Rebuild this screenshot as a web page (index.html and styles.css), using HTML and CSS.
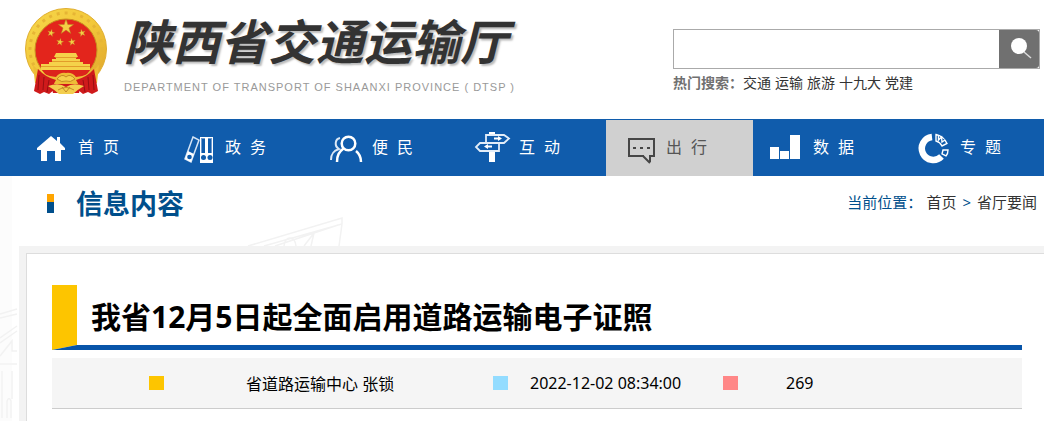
FILE: index.html
```html
<!DOCTYPE html>
<html lang="zh-CN">
<head>
<meta charset="utf-8">
<title>陕西省交通运输厅</title>
<link rel="stylesheet" href="styles.css">
</head>
<body>
<header class="header">
  <a class="brand" href="#">
    <svg class="emblem" viewBox="0 0 84 90" aria-hidden="true">
      <defs>
        <linearGradient id="gold" x1="0" y1="0" x2="1" y2="1">
          <stop offset="0" stop-color="#f6d64a"/><stop offset=".5" stop-color="#f3c83a"/><stop offset="1" stop-color="#dda22a"/>
        </linearGradient>
        <path id="star" d="M0-10 2.3-3.1 9.5-3.1 3.7 1.2 5.9 8.1 0 3.9-5.9 8.1-3.7 1.2-9.5-3.1-2.3-3.1z"/>
      </defs>
      <circle cx="42" cy="42" r="40.5" fill="url(#gold)" stroke="#e0ae30" stroke-width="1"/>
      <circle cx="42" cy="42" r="36" fill="none" stroke="#e6b535" stroke-width="3" stroke-dasharray="3 5"/>
      <circle cx="42" cy="43" r="31" fill="#e3251c" stroke="#c88f20" stroke-width="1"/>
      <g fill="#f4cf45" stroke="#b98022" stroke-width=".7">
        <use href="#star" transform="translate(42 20) scale(.8)"/>
        <use href="#star" transform="translate(27 26) rotate(15) scale(.38)"/>
        <use href="#star" transform="translate(58 26) rotate(-15) scale(.38)"/>
        <use href="#star" transform="translate(36 35) rotate(10) scale(.38)"/>
        <use href="#star" transform="translate(48 35) rotate(-10) scale(.38)"/>
      </g>
      <path d="M32 46H52L54 50H52V52H56V55H59V57H66V63H17V57H25V55H28V52H32V50H30z" fill="#f5d24a"/>
      <path d="M31 50.500H53M28 54.500H56M17 59.500H66" stroke="#dd8f22" stroke-width=".8"/>
      <path d="M18 63H66Q63 68 59 70L42 76 25 70Q21 68 18 63z" fill="#dc241c"/>
      <path d="M9 58Q18 69 32 70Q36 65 42 66Q48 65 52 70Q66 69 75 58L73 76Q60 81 42 79Q24 81 11 76z" fill="#eebd36"/>
      <path d="M14 62Q21 70 32 73Q28 79 30 83L25 87 20 85 16 87 10 84z" fill="#cf1a1b"/>
      <path d="M70 62Q63 70 52 73Q56 79 54 83L59 87 64 85 68 87 74 84z" fill="#cf1a1b"/>
      <path d="M15 68l-1 15M20 70l-1 13M25 73l-2 12M69 68l1 15M64 70l1 13M59 73l2 12" stroke="#970f12" stroke-width="1"/>
      <path d="M27 77H57L55 86H29z" fill="#cf1a1b"/>
      <path d="M24 79Q35 75 42 80Q49 75 60 79Q53 83 49 87H35Q31 83 24 79z" fill="#f3ce4e"/>
      <path d="M33 72Q38 66 42 70Q46 66 51 72Q46 76 42 74Q38 76 33 72z" fill="#f5d04b" stroke="#b87b1c" stroke-width=".8"/>
      <path d="M34 83q8-5 16 0M38 80l4 5 4-5" fill="none" stroke="#b87b1c" stroke-width=".8"/>
    </svg>
    <span class="brand-text">
      <span class="wordmark">陕西省交通运输厅</span>
      <span class="brand-en">DEPARTMENT OF TRANSPORT OF SHAANXI PROVINCE ( DTSP )</span>
    </span>
  </a>
  <div class="search">
    <form class="search-form">
      <input class="search-input" type="text" aria-label="搜索">
      <button class="search-button" type="button" aria-label="搜索">
        <svg viewBox="0 0 40 38" aria-hidden="true"><circle cx="20" cy="16" r="8" fill="#fff"/><path d="m25 22 7 6" stroke="#ddd" stroke-width="1.500"/></svg>
      </button>
    </form>
    <p class="hot"><b>热门搜索：</b><a href="#">交通</a><a href="#">运输</a><a href="#">旅游</a><a href="#">十九大</a><a href="#">党建</a></p>
  </div>
</header>

<nav class="nav">
  <a class="nav-item" href="#">
    <svg class="nav-icon" viewBox="0 0 60 57" aria-hidden="true"><path d="m33 17 6 5v-4h3v6l5 5v2h-4v11h-6V32h-8v10h-6V31h-4v-2z" fill="#fff"/></svg>
    <span class="nav-label"><span>首</span><span>页</span></span></a>
  <a class="nav-item" href="#">
    <svg class="nav-icon" viewBox="0 0 60 57" aria-hidden="true"><path d="M35 18h13v26H35z" fill="#fff"/><path d="M36 19h4v15h-4zM43 19h4v15h-4z" fill="#6f9bd0"/><path d="M37 20h3v14h-3zM43 20h3v14h-3z" fill="#105cac"/><circle cx="38.500" cy="38.500" r="2.500" fill="#105cac"/><circle cx="45" cy="38.500" r="2.500" fill="#105cac"/><path d="m28 18 6 3-8 22-6-3z" fill="none" stroke="#d5e4f5" stroke-width="1.500"/><path d="m23 32 6 3-3 8-6-3z" fill="#fff"/><circle cx="24.500" cy="38" r="2.300" fill="#105cac"/></svg>
    <span class="nav-label"><span>政</span><span>务</span></span></a>
  <a class="nav-item" href="#">
    <svg class="nav-icon" viewBox="0 0 60 57" aria-hidden="true"><g fill="none" stroke="#fff" stroke-width="2.500"><circle cx="36.500" cy="24.500" r="6.800"/><path d="M32 29c-5 4-7 7-7 14M44 32q5 4 5 11"/></g><path d="M28 19c-5 1-6 8-1 11-6 2-8 5-8 11" fill="none" stroke="#dbe8f6" stroke-width="2"/></svg>
    <span class="nav-label"><span>便</span><span>民</span></span></a>
  <a class="nav-item" href="#">
    <svg class="nav-icon" viewBox="0 0 60 57" aria-hidden="true"><path d="M30 13h6v3h-6zM30 31h6v12h-6z" fill="#fff"/><g fill="#105cac" stroke="#e2edf9" stroke-width="1.800"><path d="M27 16h18l5 3.500-5 4.500H27zM40 24H21l-4 4 4 4h19z"/></g><path d="M35 18.500h4v-1.500l4 2.500-4 2.500v-1.500h-4zM33 26.500h-4v-1.500l-4 2.500 4 2.500v-1.500h4z" fill="#fff"/></svg>
    <span class="nav-label"><span>互</span><span>动</span></span></a>
  <a class="nav-item is-active" href="#">
    <svg class="nav-icon" viewBox="0 0 60 57" aria-hidden="true"><path d="M38 36H23V19h25v17h-4v6M37 36l7 7" fill="none" stroke="#464646" stroke-width="2"/><path d="M27 27h3v2h-3zM34 27h3v2h-3zM41 27h3v2h-3z" fill="#464646"/></svg>
    <span class="nav-label"><span>出</span><span>行</span></span></a>
  <a class="nav-item" href="#">
    <svg class="nav-icon" viewBox="0 0 60 57" aria-hidden="true"><path d="M17 28h9v12h-9zM27 32h9v8h-9zM37 16h10v24H37z" fill="#fff"/></svg>
    <span class="nav-label"><span>数</span><span>据</span></span></a>
  <a class="nav-item" href="#">
    <svg class="nav-icon" viewBox="0 0 60 57" aria-hidden="true"><path d="M32 18a11.500 11.500 0 1 0 9.500 19.500" fill="none" stroke="#fff" stroke-width="6.500"/><g fill="#105cac" stroke="#fff" stroke-width="1.400"><path d="M36 15.500q7 1.500 11 9l-5 2.500q-2-4-6-5z"/><path d="M38.500 17v4l3-3 .5 5 3-2M43 31h5q0 4-2 6l-4-2z"/></g></svg>
    <span class="nav-label"><span>专</span><span>题</span></span></a>
</nav>

<main class="main">
  <svg class="scenery" viewBox="0 0 350 245" aria-hidden="true">
    <path d="M0 0h12v245H0z" fill="#fcfcfc"/>
    <g fill="none" stroke="#f2f2f2" stroke-width="1.500"><path d="M248 70 342 42v6L264 70M342 48l-3 22M275 70l63-21M284 70q1-8 6-8t6 8M304 70l10-13-3 13"/><path d="M0 138l17-5M0 142l17-4M0 162l17-12M0 167l17-12M0 180l12-15v10h5M2 195v47M7 242v-17q2-5 4 0v17M12 195v28M0 188h17"/></g>
  </svg>
  <div class="section-bar">
    <h2 class="section-title">信息内容</h2>
    <p class="crumbs">当前位置：<a href="#">首页</a><span class="sep">&gt;</span><a href="#">省厅要闻</a></p>
  </div>
  <div class="panel">
    <article class="article">
      <div class="title-bar">
        <svg class="title-mark" viewBox="0 0 25 65" aria-hidden="true"><path d="M0 65V0h25v60z" fill="#fdc500"/><path d="m0 65 25-5v5z" fill="#0855a9"/></svg>
        <h1 class="title">我省12月5日起全面启用道路运输电子证照</h1>
      </div>
      <div class="meta">
        <span class="source">省道路运输中心 张锁</span>
        <time class="date">2022-12-02 08:34:00</time>
        <span class="views">269</span>
      </div>
    </article>
  </div>
</main>
</body>
</html>
```
FILE: styles.css
```css
* { box-sizing: border-box; }
body {
  display: flex;
  flex-direction: column;
  min-height: 100vh;
  margin: 0;
  overflow-x: hidden;
  background: #fff;
  color: #000;
  font-family: "Noto Sans", "Noto Sans CJK SC", sans-serif;
  font-size: 16px;
}
a { color: inherit; text-decoration: none; }
h1, h2, p { margin: 0; }

.header {
  display: flex;
  justify-content: space-between;
  align-items: flex-start;
  padding: 7px 4px 22px 24px;
}
.brand { display: flex; gap: 16px; }
.emblem { width: 84px; height: 90px; }
.brand-text { display: flex; flex-direction: column; gap: 8px; }
.wordmark {
  color: #333;
  font-family: "Noto Sans CJK SC", sans-serif;
  font-size: 48px;
  font-style: italic;
  font-weight: 700;
  line-height: 64px;
  text-shadow: 2px 2px 2px #bbb;
  white-space: nowrap;
}
.brand-en {
  color: #999;
  font-family: "Liberation Sans", sans-serif;
  font-size: 11px;
  letter-spacing: 1px;
  line-height: 16px;
  white-space: nowrap;
}

.search { width: 367px; padding-top: 22px; }
.search-form { display: flex; height: 40px; border: 1px solid #aaa; }
.search-input { flex: 1; min-width: 0; padding: 0 8px; border: 0; outline: 0; font-size: 14px; }
.search-button { width: 40px; padding: 0; border: 0; border-radius: 0 3px 3px 0; background: #707070; }
.search-button svg { display: block; width: 40px; height: 38px; }
.hot { display: flex; gap: 4px; padding-top: 4px; color: #333; font-size: 14px; line-height: 20px; }
.hot b { margin-right: -4px; color: #707070; }

.nav { display: flex; height: 57px; padding-left: 18px; background: #105cac; }
.nav-item { display: flex; flex: 1 0 147px; align-items: center; color: #fff; white-space: nowrap; }
.nav-icon { width: 60px; height: 57px; }
.nav-label { display: flex; gap: 9px; padding-bottom: 4px; }
.is-active { border-top: 1px solid #105cac; background: #d0d0d0; color: #555; }

.main { position: relative; display: flex; flex: 1; flex-direction: column; }
.scenery { position: absolute; z-index: -1; top: 0; left: 0; width: 350px; height: 245px; }
.section-bar {
  display: flex;
  justify-content: space-between;
  align-items: center;
  height: 70px;
  padding: 0 7px 15px 47px;
}
.section-title {
  display: flex;
  align-items: center;
  gap: 22px;
  color: #004f8c;
  font-size: 27px;
  line-height: 40px;
}
.section-title::before {
  width: 7px;
  height: 19px;
  background: linear-gradient(#ffa500 8px, #004f8c 8px);
  content: "";
}
.crumbs { display: flex; padding-bottom: 4px; color: #004f8c; font-size: 15px; line-height: 24px; }
.crumbs a { color: #333; }
.crumbs a:first-child { margin-left: 4px; }
.sep { margin: 0 6px; }

.panel { display: flex; flex: 1; margin-left: 19px; padding: 7px 0 0 7px; background: #f3f3f3; }
.article { flex: 1; padding: 31px 22px 12px 25px; border: solid #ddd; border-width: 1px 0 0 1px; background: #fff; }
.title-bar { display: flex; gap: 14px; background: linear-gradient(#0855a9, #0855a9) bottom / 100% 5px no-repeat; }
.title-mark { flex: none; width: 25px; height: 65px; background: #fff; }
.title { font-size: 30px; line-height: 64px; }
.meta {
  display: flex;
  align-items: center;
  height: 51px;
  margin-top: 8px;
  padding-left: 97px;
  border-bottom: 1px solid #ccc;
  background: #f5f5f5;
}
.meta > * { display: flex; align-items: center; white-space: nowrap; }
.meta > *::before { width: 15px; height: 14px; content: ""; }
.source { width: 344px; gap: 82px; }
.source::before { background: #fdc500; }
.date { width: 230px; gap: 22px; }
.date::before { background: #93dcff; }
.views { gap: 48px; }
.views::before { background: #ff8787; }
```
